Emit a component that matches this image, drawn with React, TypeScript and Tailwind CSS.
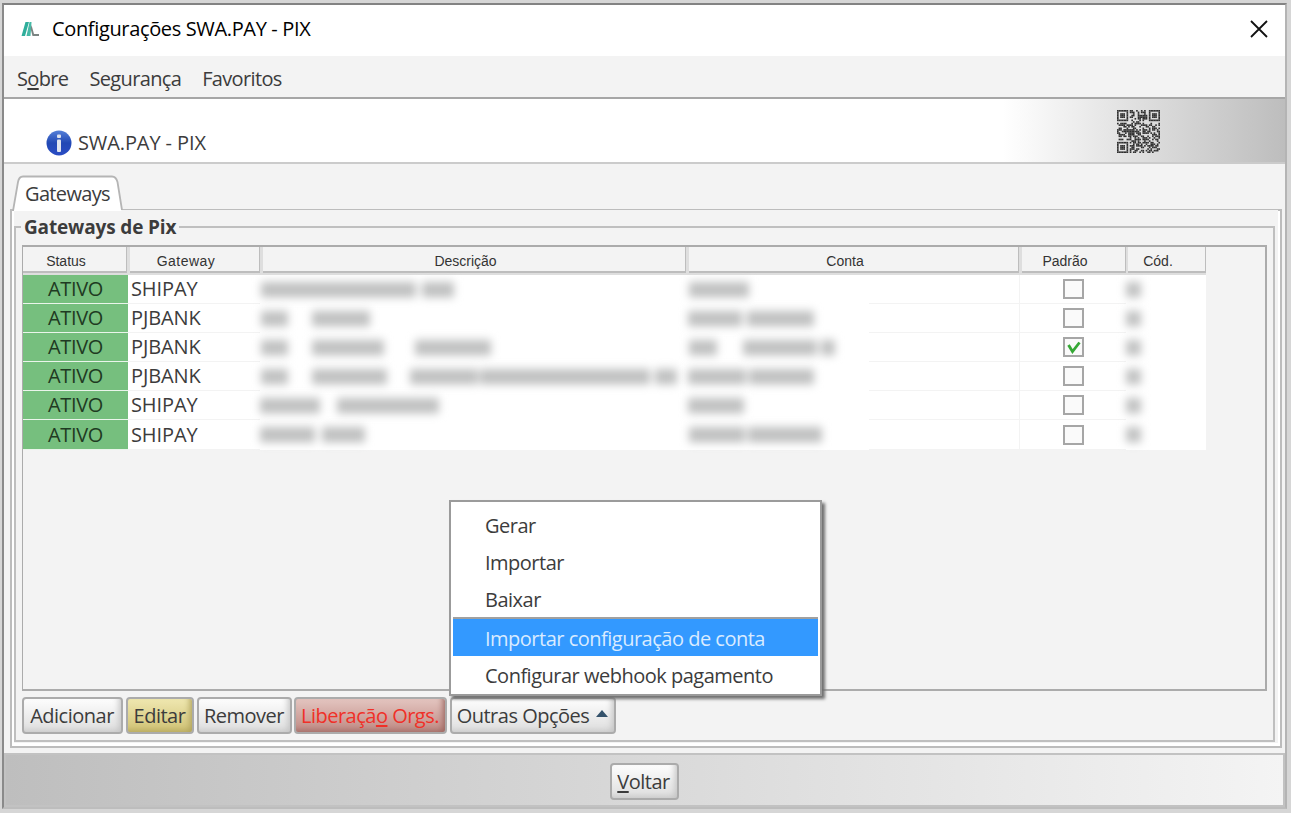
import React, { useState } from "react";

/** Columns of the gateway grid, margins are the dividers */
const HEADERS = [
  { label: "Status", cell: "w-[104px] mr-[3px]" },
  { label: "Gateway", cell: "w-[130px] mr-[3px] tracking-[0.5px]" },
  { label: "Descrição", cell: "w-[423px] mr-[3px]" },
  { label: "Conta", cell: "w-[330px] mr-[3px]" },
  { label: "Padrão", cell: "w-[104px] mr-[2px]" },
  { label: "Cód.", cell: "w-[78px]" },
];

/** Hidden values: each pair is [offset, width] of a smudge in the cell */
type Smudge = [number, number];

const ROWS: {
  gateway: string;
  desc: Smudge[];
  conta: Smudge[];
  checked: boolean;
}[] = [
  { gateway: "SHIPAY", desc: [[1, 155], [162, 32]], conta: [[2, 60]], checked: false },
  { gateway: "PJBANK", desc: [[1, 27], [52, 58]], conta: [[1, 54], [60, 67]], checked: false },
  { gateway: "PJBANK", desc: [[1, 27], [52, 72], [155, 76]], conta: [[2, 28], [56, 74], [134, 14]], checked: true },
  { gateway: "PJBANK", desc: [[1, 27], [52, 75], [150, 68], [220, 170], [395, 22]], conta: [[1, 58], [62, 65]], checked: false },
  { gateway: "SHIPAY", desc: [[0, 60], [77, 102]], conta: [[1, 56]], checked: false },
  { gateway: "SHIPAY", desc: [[0, 55], [62, 43]], conta: [[2, 56], [61, 74]], checked: false },
];

const MENU_ITEMS = [
  "Gerar",
  "Importar",
  "Baixar",
  "Importar configuração de conta",
  "Configurar webhook pagamento",
];

function Logo() {
  return (
    <svg className="h-[16px] w-[19px]" viewBox="0 0 19 16">
      <path d="M4.5 1H8L4 15H0.5Z" fill="#2fae9b" />
      <path d="M8.5 1H10.5L9.5 15H5.5Z" fill="#46b9a6" />
      <path d="M10.5 4L13 13H18V15H11.5L9.7 8Z" fill="#7b8482" />
    </svg>
  );
}

function InfoIcon() {
  return (
    <svg className="h-[26px] w-[26px]" viewBox="0 0 26 26">
      <defs>
        <linearGradient id="info" x1="0" y1="0" x2="0" y2="1">
          <stop offset="0" stopColor="#5580d8" />
          <stop offset="0.5" stopColor="#2148b4" />
          <stop offset="1" stopColor="#2a4cc4" />
        </linearGradient>
      </defs>
      <circle cx="13" cy="13" r="12.5" fill="url(#info)" />
      <rect x="11" y="4.5" width="4" height="3.4" rx="1" fill="#dfe4ee" />
      <rect x="11" y="9.5" width="4" height="12.5" rx="1" fill="#dfe4ee" />
    </svg>
  );
}

const QR_SIZE = 27;

// finder squares in three corners, the rest is a fixed noise pattern
function qrModule(x: number, y: number) {
  const corners = [[0, 0], [QR_SIZE - 7, 0], [0, QR_SIZE - 7]];
  for (const [cx, cy] of corners) {
    const dx = x - cx;
    const dy = y - cy;
    if (dx >= -1 && dx <= 7 && dy >= -1 && dy <= 7) {
      const ring = Math.max(Math.abs(dx - 3), Math.abs(dy - 3));
      return ring === 3 || ring <= 1;
    }
  }
  const n = Math.sin(x * 12.9898 + y * 78.233) * 43758.5453;
  return n - Math.floor(n) < 0.55;
}

function QrCode() {
  const cells = [];
  for (let y = 0; y < QR_SIZE; y++) {
    for (let x = 0; x < QR_SIZE; x++) {
      if (qrModule(x, y)) {
        cells.push(<rect key={`${x}-${y}`} x={x} y={y} width="1.03" height="1.03" />);
      }
    }
  }
  return (
    <svg className="h-[43px] w-[43px]" viewBox="0 0 27 27" fill="#303030">
      {cells}
    </svg>
  );
}

function Smudges({ items }: { items: Smudge[] }) {
  return (
    <div className="relative h-full blur-[4.5px]">
      {items.map(([left, width]) => (
        <div
          key={left}
          className="absolute top-[6px] h-[17px] bg-linear-to-b from-[#d6d7d7] via-[#b9baba] to-[#cfd0d0]"
          style={{ left, width }}
        />
      ))}
    </div>
  );
}

function CheckBox({ checked }: { checked: boolean }) {
  return (
    <div className="flex h-5 w-[21px] items-center justify-center border-2 border-[#a6a6a6] bg-[#fafafa]">
      {checked && (
        <svg className="h-[13px] w-[14px]" viewBox="0 0 14 13">
          <path d="M1.500 4L5.500 10.500L12.500 1.500" fill="none" stroke="#35a835" strokeWidth="2.8" />
        </svg>
      )}
    </div>
  );
}

function SwingButton({
  className,
  children,
  onClick,
}: {
  className: string;
  children: React.ReactNode;
  onClick?: () => void;
}) {
  return (
    <button
      onClick={onClick}
      className={`flex h-[37px] items-center justify-center whitespace-nowrap rounded-[4px] border-2 border-[#ababab] pr-px ${className}`}
    >
      {children}
    </button>
  );
}

const GREY_BUTTON =
  "bg-linear-to-b from-[#fdfdfd] to-[#dedede] shadow-[inset_-4px_-3px_6px_-2px_#c4c4c4]";

export default function App() {
  const [menuOpen, setMenuOpen] = useState(true);

  return (
    <div className="h-[813px] w-[1291px] overflow-hidden bg-[#d6d6d6] pl-[2px] pt-[3px] font-['Open_Sans',sans-serif] text-[20px] tracking-[-0.5px] text-[#3c3c3c]">
      <div className="flex h-[806px] w-[1285px] flex-col border-2 border-b-[#bdbdbd] border-l-[#8a8a8a] border-r-[#b4b4b4] border-t-[#838383] bg-[#f3f3f3]">
        {/* Title bar */}
        <header className="flex h-[51px] shrink-0 items-center bg-white pb-[3px] pl-[17px] pr-[17px] text-black">
          <Logo />
          <span className="ml-[12px] grow tracking-[-0.35px]">Configurações SWA.PAY - PIX</span>
          <svg className="h-[18px] w-[18px]" viewBox="0 0 18 18" stroke="#111" strokeWidth="1.8">
            <path d="M1 1L17 17M17 1L1 17" />
          </svg>
        </header>

        {/* Menu bar */}
        <nav className="flex h-[43px] shrink-0 items-center gap-[21px] border-b-2 border-[#a6a6a6] pl-[13px] pt-[4px] tracking-[-0.65px]">
          <span>
            S<u className="underline-offset-2">o</u>bre
          </span>
          <span>Segurança</span>
          <span>Favoritos</span>
        </nav>

        {/* Page heading */}
        <div className="flex h-[65px] shrink-0 border-b-2 border-[#cbcbcb] bg-linear-to-r from-white from-78% to-[#bdbdbd]">
          <div className="flex grow items-center pl-[42px] pt-[24px]">
            <InfoIcon />
            <span className="ml-[6px] tracking-[-0.1px]">SWA.PAY - PIX</span>
          </div>
          <div className="pr-[125px] pt-[11px]">
            <QrCode />
          </div>
        </div>

        {/* Tab strip */}
        <div className="flex h-[45px] shrink-0 items-end pl-[8px]">
          <div className="relative z-10 -mb-[2px] h-[36px] w-[112px]">
            <svg className="absolute inset-0" width="112" height="36" viewBox="0 0 112 36">
              <path d="M1 36L6 7Q7 1.5 11 1.5H100Q104 1.5 105.500 7L110 34.500V36Z" fill="#fff" />
              <path d="M1 36L6 7Q7 1.5 11 1.5H100Q104 1.5 105.500 7L110 35" fill="none" stroke="#b5b5b5" strokeWidth="1.8" />
            </svg>
            <span className="relative block pl-[13px] pt-[6px] leading-[26px] tracking-[-0.65px]">Gateways</span>
          </div>
        </div>

        {/* Tab panel */}
        <main className="ml-[6px] h-[539px] w-[1272px] shrink-0 border-2 border-[#bcbcbc] bg-white p-[3px] pt-0">
          <div className="-ml-[1px] -mt-px h-[533px] w-[1264px] bg-[#f3f3f3] pt-[6px]">
            <fieldset className="h-[526px] w-[1261px] border-2 border-[#bfbfbf] pl-[6px]">
              <legend className="-ml-px h-[21px] px-[3px] text-[19px] font-bold leading-[22px] tracking-[-0.15px]">
                Gateways de Pix
              </legend>

              <div className="mt-[8px] h-[446px] w-[1245px] border-2 border-l border-[#ababab]">
                <div className="flex h-[28px] w-max bg-[#dedede] pb-[2px] font-['Liberation_Sans',sans-serif] text-[14px] tracking-normal text-[#333]">
                  {HEADERS.map((h) => (
                    <div
                      key={h.label}
                      className={`flex items-center justify-center border-b-2 border-r border-[#bdbdbd] bg-[#f3f3f3] pr-[17px] pt-1 ${h.cell}`}
                    >
                      {h.label}
                    </div>
                  ))}
                </div>
                {ROWS.map((row, i) => (
                  <div key={i} className="flex h-[29.1px] w-[1183px] bg-white">
                    <div className="flex w-[105px] items-center justify-center border-b border-[#eaf5eb] bg-[#76bf7e] tracking-[-0.3px] text-[#1f3a22]">
                      ATIVO
                    </div>
                    <div className="flex w-[132px] items-center border-b border-[#f3f3f3] pl-[3px] tracking-[-0.1px]">
                      {row.gateway}
                    </div>
                    <div className="w-[427px]">
                      <Smudges items={row.desc} />
                    </div>
                    <div className="w-[182px]">
                      <Smudges items={row.conta} />
                    </div>
                    <div className="w-[150px] border-b border-[#f3f3f3]" />
                    <div className="flex w-[107px] items-center justify-center border-b border-l border-[#f3f3f3] pl-px">
                      <CheckBox checked={row.checked} />
                    </div>
                    <div className="grow">
                      <Smudges items={[[0, 15]]} />
                    </div>
                  </div>
                ))}
              </div>

              {/* Action buttons */}
              <div className="mt-[6px] flex">
                <SwingButton className={`mr-[3px] w-[101px] ${GREY_BUTTON}`}>Adicionar</SwingButton>
                <SwingButton className="mr-[3px] w-[68px] bg-linear-to-b from-[#efe7b0] to-[#d0c274] shadow-[inset_-4px_-3px_6px_-2px_#b0a35c]">
                  Editar
                </SwingButton>
                <SwingButton className={`mr-[2px] w-[95px] ${GREY_BUTTON}`}>Remover</SwingButton>
                <SwingButton className="mr-[3px] w-[153px] bg-linear-to-b from-[#e3c5c0] to-[#bf8a84] text-[#f03028] shadow-[inset_-4px_-3px_6px_-2px_#9c6862]">
                  Liberaçã<u className="underline-offset-2">o</u>&nbsp;Orgs.
                </SwingButton>
                <div className="relative">
                  <SwingButton className={`w-[166px] ${GREY_BUTTON}`} onClick={() => setMenuOpen((open) => !open)}>
                    Outras Opções
                    <svg className="mb-1 ml-[7px] h-[7px] w-[12px]" viewBox="0 0 12 7">
                      <path d="M0 7L6 0L12 7Z" fill="#34526b" />
                    </svg>
                  </SwingButton>

                  {menuOpen && (
                    <ul className="absolute -left-px bottom-[38px] z-20 h-[196px] w-[373px] border-2 border-[#9b9b9b] bg-white px-[2px] pt-[4px] shadow-[3px_3px_3px_#707070]">
                      {MENU_ITEMS.map((item) => (
                        <li
                          key={item}
                          className={
                            item === "Importar configuração de conta"
                              ? "flex h-[39px] items-center border-t-2 border-[#a0a0a0] bg-[#3399ff] pl-[32px] pt-[3px] text-[#d9ebff]"
                              : "flex h-[37px] items-center pl-[32px] pt-[2px]"
                          }
                        >
                          {item}
                        </li>
                      ))}
                    </ul>
                  )}
                </div>
              </div>
            </fieldset>
          </div>
        </main>

        {/* Footer */}
        <footer className="mt-[5px] flex grow items-center justify-center border-2 border-[#c2c2c2] bg-linear-to-r from-[#bebebe] to-[#f4f4f4] pr-px pt-[3px]">
          <SwingButton className={`w-[69px] ${GREY_BUTTON}`}>
            <u className="underline-offset-2">V</u>oltar
          </SwingButton>
        </footer>
      </div>
    </div>
  );
}
